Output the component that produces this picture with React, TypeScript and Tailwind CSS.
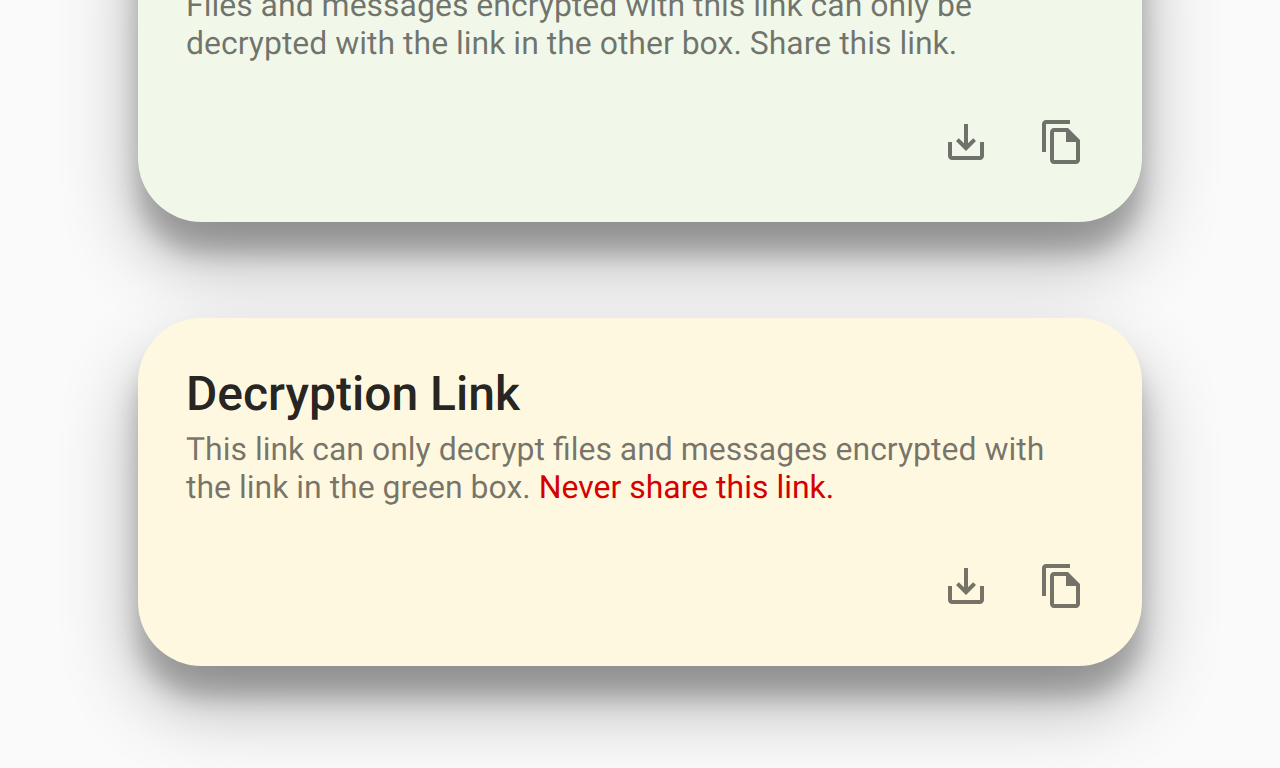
import type { ReactNode } from 'react';

function DownloadIcon() {
  return (
    <svg viewBox="0 0 24 24" className="size-12" fill="currentColor">
      <path d="M19 12v7H5v-7H3v7c0 1.1.9 2 2 2h14c1.1 0 2-.9 2-2v-7h-2zm-6 .67l2.59-2.58L17 11.5l-5 5-5-5 1.41-1.41L11 12.67V3h2z" />
    </svg>
  );
}

function CopyIcon() {
  return (
    <svg viewBox="0 0 24 24" className="size-12" fill="currentColor">
      <path d="M16 1H4c-1.1 0-2 .9-2 2v14h2V3h12V1zm-1 4H8c-1.1 0-1.99.9-1.99 2L6 21c0 1.1.89 2 1.99 2H19c1.1 0 2-.9 2-2V11l-6-6zM8 21V7h6v5h5v9H8z" />
    </svg>
  );
}

type LinkCardProps = { title: string; color: string; children: ReactNode };

function LinkCard({ title, color, children }: LinkCardProps) {
  return (
    <section
      className={`flex h-[348px] shrink-0 flex-col rounded-[64px] px-12 pt-12 pb-14 shadow-[0_38px_76px_rgba(0,0,0,0.3),0_30px_24px_rgba(0,0,0,0.22)] ${color}`}
    >
      <h2 className="text-[48px] leading-[56px] font-medium text-black/87">{title}</h2>
      <p className="mt-2 text-[31.97px] leading-[38px] text-black/54">{children}</p>
      <div className="mt-auto flex justify-end gap-12 pr-2 text-black/54">
        <button aria-label="Download">
          <DownloadIcon />
        </button>
        <button aria-label="Copy">
          <CopyIcon />
        </button>
      </div>
    </section>
  );
}

export default function App() {
  return (
    <main className="h-[768px] overflow-hidden bg-[#fafafa] font-['Roboto',sans-serif] [text-rendering:geometricPrecision]">
      <div className="mx-auto -mt-[126px] flex w-[1004px] flex-col gap-24">
        <LinkCard title="Encryption Link" color="bg-[#f1f8e9]">
          Files and messages encrypted with this link can only be
          <br />
          decrypted with the link in the other box. Share this link.
        </LinkCard>
        <LinkCard title="Decryption Link" color="bg-[#fff8e1]">
          This link can only decrypt files and messages encrypted with
          <br />
          the link in the green box. <span className="text-[#d50000]">Never share this link.</span>
        </LinkCard>
      </div>
    </main>
  );
}
